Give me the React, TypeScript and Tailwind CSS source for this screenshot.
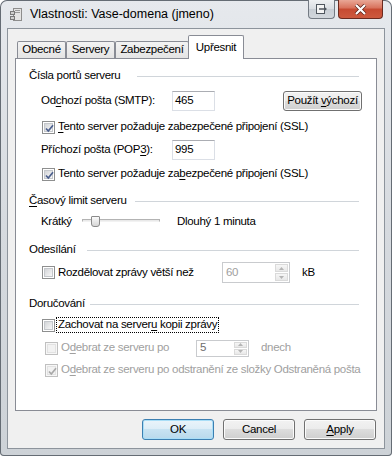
import React from "react";

const Check: React.FC<{ checked?: boolean; disabled?: boolean }> = ({ checked, disabled }) => (
  <span
    className={`relative flex h-[13px] w-[13px] shrink-0 items-center justify-center border ${
      disabled ? "border-[#c0c0c0] bg-[#f7f7f7]" : "border-[#8e8f8f] bg-white"
    }`}
  >
    <span
      className={`h-[9px] w-[9px] border ${
        disabled
          ? "border-[#e2e2e2] bg-[#f2f2f2]"
          : "border-[#c4c7cb] bg-linear-to-br from-[#d3d5d8] to-[#f8f8f8]"
      }`}
    />
    {checked && (
      <svg className="absolute left-[1px] top-[1px]" width="11" height="11" viewBox="0 0 11 11">
        <path
          d="M2 5.5 L4.3 8 L9 2.2"
          fill="none"
          stroke={disabled ? "#a8a8a8" : "#4b5f8d"}
          strokeWidth="1.7"
        />
      </svg>
    )}
  </span>
);

const Group: React.FC<{ label: React.ReactNode; w: string }> = ({ label, w }) => (
  <div className="ml-[13px] mr-[17px] flex h-[16px] shrink-0 items-center">
    <span className={`${w} shrink-0 whitespace-nowrap`}>{label}</span>
    <span className="h-px flex-1 bg-[#d0d5da]" />
  </div>
);

const Arrow: React.FC<{ up?: boolean }> = ({ up }) => (
  <svg width="5" height="3" viewBox="0 0 5 3">
    <path d={up ? "M0 3 L2.5 0 L5 3Z" : "M0 0 L2.5 3 L5 0Z"} fill="#b4b4b4" />
  </svg>
);

const Spin: React.FC<{ value: string; box: string; dark?: boolean }> = ({ value, box, dark }) => (
  <div className={`flex shrink-0 border border-[#c9cbce] bg-white ${box}`}>
    <span className={`flex flex-1 items-center pl-[3px] ${dark ? "text-[#6d6d6d]" : "text-[#a0a0a0]"}`}>
      {value}
    </span>
    <div className="flex w-[15px] flex-col gap-px p-px">
      <span className="flex flex-1 items-center justify-center border border-[#dadada] bg-linear-to-b from-[#f6f6f6] to-[#e8e8e8]">
        <Arrow up />
      </span>
      <span className="flex flex-1 items-center justify-center border border-[#dadada] bg-linear-to-b from-[#f6f6f6] to-[#e8e8e8]">
        <Arrow />
      </span>
    </div>
  </div>
);

const DlgButton: React.FC<{ children: React.ReactNode; primary?: boolean }> = ({ children, primary }) => (
  <button
    className={`flex h-[21px] w-[72px] items-center justify-center rounded-[3px] border ${
      primary
        ? "border-[#3c7fb1] bg-[linear-gradient(#eaf4fa,#dcedf7_50%,#c8e3f2_50%,#b9d9ec)] shadow-[inset_0_0_0_1px_#a9def7]"
        : "border-[#707070] bg-[linear-gradient(#f2f2f2,#ebebeb_50%,#dddddd_50%,#cfcfcf)] shadow-[inset_0_0_0_1px_#fbfbfb]"
    }`}
  >
    {children}
  </button>
);

const TitleIcon = () => (
  <svg width="12" height="13" viewBox="0 0 12 13">
    <rect x="3.5" y="0.5" width="8" height="12" fill="#e4e4e4" stroke="#8d8d8d" />
    <rect x="5" y="2" width="5" height="1" fill="#9a9a9a" />
    <rect x="5" y="4" width="5" height="1" fill="#9a9a9a" />
    <rect x="0.5" y="3.5" width="4" height="3" fill="#cfcfcf" stroke="#7a7a7a" />
    <rect x="0.5" y="8.5" width="4" height="3" fill="#cfcfcf" stroke="#7a7a7a" />
  </svg>
);

export default function App() {
  return (
    <div className="flex h-[456px] w-[392px] flex-col rounded-t-[7px] rounded-b-[4px] bg-linear-to-b from-[#e6e9ed] via-[#d6dadf] to-[#cdd2d7] font-['Liberation_Sans',Arial,sans-serif] text-[11.5px] leading-none tracking-[-0.3px] text-black shadow-[inset_0_0_0_1px_#656c74]">
      <div className="flex h-[28px] shrink-0 items-start">
        <div className="flex h-[28px] items-center pl-[10px]">
          <TitleIcon />
          <span className="ml-[8px] text-[12.5px] tracking-normal">Vlastnosti: Vase-domena (jmeno)</span>
        </div>
        <div className="ml-auto mr-[9px] flex gap-[3px]">
          <div className="flex h-[19px] w-[27px] items-center justify-center rounded-b-[4px] border border-t-0 border-[#737a83] bg-[linear-gradient(#eef0f2,#d9dde2_50%,#c7cdd4_50%,#d2d7dc)]">
            <svg width="12" height="10" viewBox="0 0 12 10">
              <rect x="0.5" y="0.5" width="8" height="9" fill="#f4f4f4" stroke="#4f565e" />
              <path d="M3 5 H10" stroke="#4f565e" strokeWidth="1.5" />
              <path d="M8 2.5 L11 5 L8 7.5Z" fill="#4f565e" />
            </svg>
          </div>
          <div className="flex h-[19px] w-[45px] items-center justify-center rounded-b-[4px] border border-t-0 border-[#6b2a1f] bg-[linear-gradient(#e9a796,#d8715b_45%,#c64a31_50%,#cd5a3f)]">
            <svg width="13" height="11" viewBox="0 0 13 11">
              <path d="M2 1 L11 10 M11 1 L2 10" stroke="#5a2218" strokeWidth="3.6" />
              <path d="M2 1 L11 10 M11 1 L2 10" stroke="#ffffff" strokeWidth="2.2" />
            </svg>
          </div>
        </div>
      </div>

      <div className="flex flex-1 flex-col px-[7px] pb-[7px]">
        <div className="flex flex-1 flex-col border border-[#8d949c] bg-[#f0f0f0] px-[7px]">
          <div className="mt-[6px] flex h-[23px] shrink-0 items-end pl-[2px]">
            <div className="flex h-[17px] w-[49px] items-center justify-center rounded-t-[2px] border border-b-0 border-[#898c95] bg-linear-to-b from-[#f3f3f3] to-[#e4e4e4]">
              Obecné
            </div>
            <div className="flex h-[17px] w-[49px] items-center justify-center rounded-t-[2px] border border-b-0 border-[#898c95] bg-linear-to-b from-[#f3f3f3] to-[#e4e4e4]">
              Servery
            </div>
            <div className="flex h-[17px] w-[74px] items-center justify-center rounded-t-[2px] border border-b-0 border-[#898c95] bg-linear-to-b from-[#f3f3f3] to-[#e4e4e4]">
              Zabezpečení
            </div>
            <div className="relative z-10 -mb-px -ml-px flex h-[24px] w-[56px] items-start justify-center rounded-t-[2px] border border-b-0 border-[#898c95] bg-white pt-[6px]">
              Upřesnit
            </div>
          </div>

          <div className="flex h-[353px] shrink-0 flex-col border border-[#898c95] bg-white">
            <div className="mt-[9px]">
              <Group label="Čísla portů serveru" w="w-[108px]" />
            </div>

            <div className="ml-[25px] mt-[7px] flex h-[20px] items-center">
              <span className="w-[131px] shrink-0 whitespace-nowrap">
                Od<span className="underline underline-offset-2">c</span>hozí pošta (SMTP):
              </span>
              <div className="flex h-[20px] w-[43px] items-center border border-[#dbdfe6] border-t-[#abadb3] pl-[2px]">
                465
              </div>
              <button className="ml-[68px] flex h-[20px] w-[79px] items-center justify-center rounded-[3px] border border-[#707070] bg-[linear-gradient(#f2f2f2,#ebebeb_50%,#dddddd_50%,#cfcfcf)] shadow-[inset_0_0_0_1px_#fbfbfb]">
                Použít&nbsp;<span className="underline underline-offset-2">v</span>ýchozí
              </button>
            </div>

            <div className="ml-[26px] mt-[8px] flex h-[16px] items-center">
              <Check checked />
              <span className="ml-[3px] whitespace-nowrap">
                <span className="underline underline-offset-2">T</span>ento server požaduje zabezpečené připojení (SSL)
              </span>
            </div>

            <div className="ml-[25px] mt-[5px] flex h-[20px] items-center">
              <span className="w-[131px] shrink-0 whitespace-nowrap">
                Příchozí pošta (POP<span className="underline underline-offset-2">3</span>):
              </span>
              <div className="flex h-[20px] w-[43px] items-center border border-[#dbdfe6] border-t-[#abadb3] pl-[2px]">
                995
              </div>
            </div>

            <div className="ml-[26px] mt-[6px] flex h-[16px] items-center">
              <Check checked />
              <span className="ml-[3px] whitespace-nowrap">
                Tento server požaduje za<span className="underline underline-offset-2">b</span>ezpečené připojení (SSL)
              </span>
            </div>

            <div className="mt-[11px]">
              <Group
                label={
                  <>
                    <span className="underline underline-offset-2">Č</span>asový limit serveru
                  </>
                }
                w="w-[106px]"
              />
            </div>

            <div className="ml-[25px] mt-[3px] flex h-[20px] items-center">
              <span className="w-[41px] shrink-0">Krátký</span>
              <div className="relative h-[20px] w-[78px] shrink-0">
                <div className="absolute left-0 right-0 top-[7px] h-[3px] border border-[#b3b3b3] border-b-[#f2f2f2] bg-[#e9e9e9]" />
                <div className="absolute left-[9px] top-[4px] h-[11px] w-[9px] rounded-b-[3px] rounded-t-[1px] border border-[#8a8a8a] bg-linear-to-b from-[#fafafa] to-[#d6d6d6]" />
              </div>
              <span className="ml-[17px] whitespace-nowrap">Dlouhý 1 minuta</span>
            </div>

            <div className="mt-[10px]">
              <Group label="Odesílání" w="w-[58px]" />
            </div>

            <div className="ml-[26px] mt-[4px] flex h-[21px] items-center">
              <div className="flex w-[180px] shrink-0 items-center">
                <Check />
                <span className="ml-[3px] whitespace-nowrap">Rozdělovat zprávy větší než</span>
              </div>
              <Spin value="60" box="h-[21px] w-[68px]" />
              <span className="ml-[12px]">kB</span>
            </div>

            <div className="mt-[13px]">
              <Group label="Doručování" w="w-[61px]" />
            </div>

            <div className="ml-[26px] mt-[5px] flex h-[16px] items-center">
              <Check />
              <span className="ml-px flex h-[16px] items-center whitespace-nowrap border border-dotted border-black px-px">
                Zachovat na server<span className="underline underline-offset-2">u</span>&nbsp;kopii zprávy
              </span>
            </div>

            <div className="ml-[29px] mt-[5px] flex h-[20px] items-center">
              <div className="flex w-[151px] shrink-0 items-center">
                <Check disabled />
                <span className="ml-[3px] whitespace-nowrap text-[#a0a0a0]">
                  O<span className="underline underline-offset-2">d</span>ebrat ze serveru po
                </span>
              </div>
              <Spin value="5" box="h-[17px] w-[53px]" dark />
              <span className="ml-[12px] text-[#a0a0a0]">dnech</span>
            </div>

            <div className="ml-[29px] mt-[4px] flex h-[16px] items-center">
              <Check checked disabled />
              <span className="ml-[3px] whitespace-nowrap text-[#a0a0a0]">
                O<span className="underline underline-offset-2">d</span>ebrat ze serveru po odstranění ze složky Odstraněná pošta
              </span>
            </div>
          </div>

          <div className="mt-[8px] flex justify-end gap-[9px] pr-[1px]">
            <DlgButton primary>OK</DlgButton>
            <DlgButton>Cancel</DlgButton>
            <DlgButton>
              <span>
                <span className="underline underline-offset-2">A</span>pply
              </span>
            </DlgButton>
          </div>
        </div>
      </div>
    </div>
  );
}
